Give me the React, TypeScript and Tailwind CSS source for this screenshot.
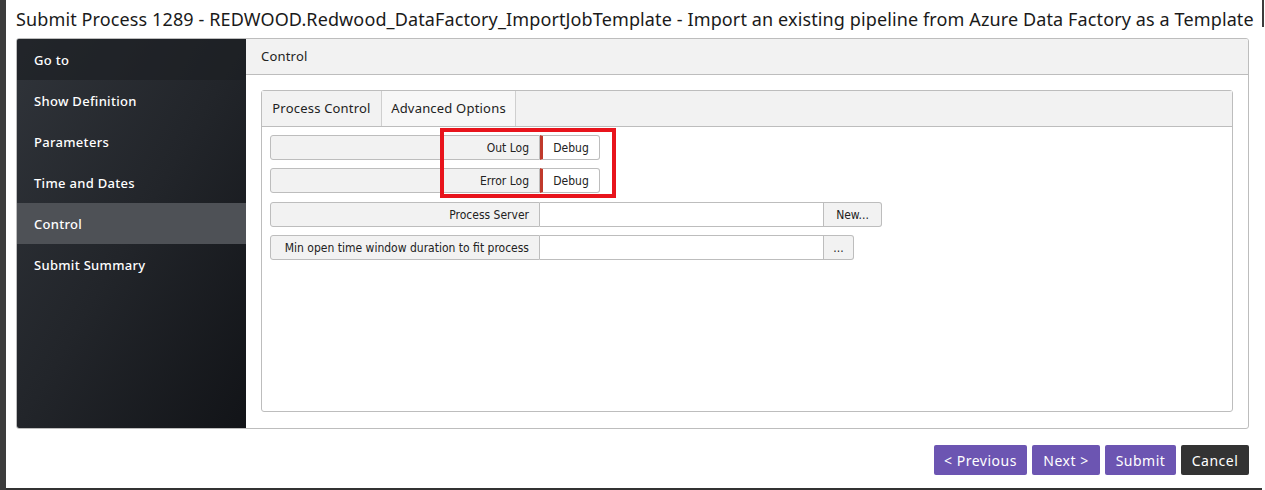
import React from 'react';

const navItems = ['Show Definition', 'Parameters', 'Time and Dates', 'Control', 'Submit Summary'];

const Row: React.FC<{ label: string; value?: string; button?: string; marked?: boolean }> = ({
  label,
  value,
  button,
  marked,
}) => (
  <div className="flex h-[25px]">
    <div className="w-[270px] flex items-center justify-end pr-[10px] bg-[#f2f2f2] border border-[#bdbdbd] rounded-l-[3px] text-[#222]">
      {label}
    </div>
    {marked ? (
      <div className="w-[60px] flex items-center justify-center bg-white border border-l-0 border-[#bdbdbd] rounded-r-[3px] border-l-[3px] border-l-[#c0392b] text-[#222]">
        {value}
      </div>
    ) : (
      <>
        <div className="w-[284px] bg-white border border-l-0 border-[#bdbdbd]" />
        <div
          className={`flex items-center justify-center bg-[#f2f2f2] border border-l-0 border-[#bdbdbd] rounded-r-[3px] text-[#222] ${
            button === '...' ? 'w-[30px]' : 'w-[58px]'
          }`}
        >
          {button}
        </div>
      </>
    )}
  </div>
);

export default function App() {
  return (
    <div className="w-[1265px] h-[490px] flex bg-white overflow-hidden font-['Noto_Sans',sans-serif]">
      <div className="w-[6px] bg-[#3c3c3c]" />
      <div className="flex-1 flex flex-col border-b-2 border-[#333]">
        <div className="pl-[10px] pt-[7px] h-[38px] text-[18px] leading-[24px] tracking-[0.12px] text-[#1a1a1a] whitespace-nowrap">
          Submit Process 1289 - REDWOOD.Redwood_DataFactory_ImportJobTemplate - Import an existing pipeline from Azure Data Factory as a Template
        </div>

        <div className="ml-[10px] w-[1233px] h-[391px] flex border border-[#bdbdbd] rounded-[3px] overflow-hidden">
          {/* Sidebar */}
          <div className="w-[229px] flex flex-col bg-gradient-to-br from-[#30343a] via-[#22252a] to-[#121418] text-white text-[13px] font-medium">
            <div className="h-[41px] flex items-center pl-[17px] pt-[2px] bg-[#1d1f23]/70 tracking-[0.3px]">Go to</div>
            {navItems.map((item) => (
              <div
                key={item}
                className={`h-[41px] flex items-center pl-[17px] pt-[2px] tracking-[0.3px] ${
                  item === 'Control' ? 'bg-[#4e5156]' : ''
                }`}
              >
                {item}
              </div>
            ))}
          </div>

          {/* Content */}
          <div className="flex-1 flex flex-col">
            <div className="h-[36px] flex items-center pl-[15px] pt-[1px] bg-[#f2f2f2] border-b border-[#bdbdbd] text-[13px] text-[#222] tracking-[0.2px]">
              Control
            </div>
            <div className="flex-1 pl-[15px] pr-[15px] pt-[15px] pb-[16px]">
              <div className="h-full border border-[#bdbdbd] rounded-[3px] flex flex-col">
                <div className="h-[36px] flex bg-[#f2f2f2] border-b border-[#bdbdbd] text-[13px] text-[#222]">
                  <div className="w-[120px] flex items-center justify-center pt-[1px] border-r border-[#cfcfcf] tracking-[0.2px]">
                    Process Control
                  </div>
                  <div className="w-[134px] flex items-center justify-center pt-[1px] bg-[#f7f7f7] border-r border-[#cfcfcf] tracking-[0.2px]">
                    Advanced Options
                  </div>
                </div>
                <div className="relative pl-[8px] pt-[8px] flex flex-col gap-[8px] text-[12px] font-['Liberation_Sans_Narrow','DejaVu_Sans_Condensed',sans-serif]">
                  <Row label="Out Log" value="Debug" marked />
                  <Row label="Error Log" value="Debug" marked />
                  <div className="mt-[1px] flex flex-col gap-[8px]">
                    <Row label="Process Server" button="New..." />
                    <Row label="Min open time window duration to fit process" button="..." />
                  </div>
                  <div className="absolute left-[178px] top-[1px] w-[176px] h-[70px] border-[4px] border-[#e8141c]" />
                </div>
              </div>
            </div>
          </div>
        </div>

        <div className="mt-[16px] ml-[10px] w-[1233px] flex justify-end gap-[5px] text-[14px] text-white tracking-[0.5px]">
          <button className="h-[30px] w-[93px] rounded-[2px] bg-[#6c55b2]">&lt; Previous</button>
          <button className="h-[30px] w-[68px] rounded-[2px] bg-[#6c55b2]">Next &gt;</button>
          <button className="h-[30px] w-[71px] rounded-[2px] bg-[#6c55b2]">Submit</button>
          <button className="h-[30px] w-[68px] rounded-[2px] bg-[#333333]">Cancel</button>
        </div>
      </div>
      <div className="w-[3px] bg-white">
        <div className="h-[27px] w-[2px] bg-[#3c3c3c]" />
      </div>
    </div>
  );
}
